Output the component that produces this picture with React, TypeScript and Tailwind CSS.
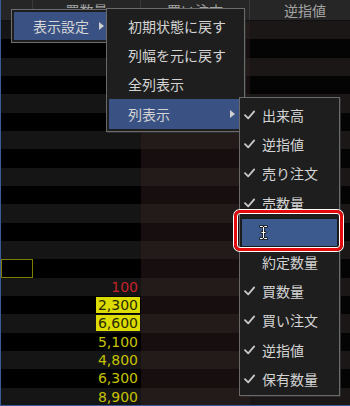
import React from "react";

type Num = { t: string; kind: "red" | "hl" | "y" };

const nums: Record<number, Num> = {
  14: { t: "100", kind: "red" },
  15: { t: "2,300", kind: "hl" },
  16: { t: "6,600", kind: "hl" },
  17: { t: "5,100", kind: "y" },
  18: { t: "4,800", kind: "y" },
  19: { t: "6,300", kind: "y" },
  20: { t: "8,900", kind: "y" },
};

function Check() {
  return (
    <svg width="11" height="10" viewBox="0 0 11 10" className="shrink-0">
      <path d="M1 5.2 L4.2 8.4 L10.2 1.4" fill="none" stroke="#c8c8c8" strokeWidth="1.8" strokeLinecap="round" strokeLinejoin="round" />
    </svg>
  );
}

function Tri() {
  return (
    <svg width="5" height="8" viewBox="0 0 5 8">
      <path d="M0 0 L5 4 L0 8 Z" fill="#d0d0d0" />
    </svg>
  );
}

function IBeam() {
  return (
    <svg width="9" height="15" viewBox="0 0 9 15">
      <path d="M1.5 1.5 H3.5 L4.5 2.5 L5.5 1.5 H7.5 M4.5 2.5 V12.5 M1.5 13.5 H3.5 L4.5 12.5 L5.5 13.5 H7.5 M3 7.5 H6" fill="none" stroke="#1a1a1a" strokeWidth="2.6" strokeLinecap="square" />
      <path d="M1.5 1.5 H3.5 L4.5 2.5 L5.5 1.5 H7.5 M4.5 2.5 V12.5 M1.5 13.5 H3.5 L4.5 12.5 L5.5 13.5 H7.5 M3 7.5 H6" fill="none" stroke="#ffffff" strokeWidth="1" strokeLinecap="square" />
    </svg>
  );
}

export default function App() {
  const rows = Array.from({ length: 21 }, (_, k) => k);
  const sub3 = [
    { t: "出来高", c: true },
    { t: "逆指値", c: true },
    { t: "売り注文", c: true },
    { t: "売数量", c: true },
    { t: "", c: false, hl: true },
    { t: "約定数量", c: false },
    { t: "買数量", c: true },
    { t: "買い注文", c: true },
    { t: "逆指値", c: true },
    { t: "保有数量", c: true },
  ];
  return (
    <div className="relative w-[350px] h-[406px] overflow-hidden bg-black border-l border-b border-[#3b5a9a] font-['Noto_Sans_CJK_JP',sans-serif]">
      {/* header */}
      <div className="flex h-[21px] bg-[#262626] border-b border-[#111111] text-[14px] leading-[20px] text-[#a3a3a3]">
        <div className="w-[32px] border-r border-[#3a3a3a]" />
        <div className="w-[108px] border-r border-[#3a3a3a] text-center">買数量</div>
        <div className="w-[109px] border-r border-[#3a3a3a] text-center">買い注文</div>
        <div className="flex-1 text-center pl-[10px]">逆指値</div>
      </div>
      {/* rows */}
      {rows.map((k) => {
        const light = k % 2 === 0;
        const n = nums[k];
        return (
          <div key={k} className="flex h-[18.33px]">
            <div className={`w-[32px] ${light ? "bg-[#151515]" : "bg-black"} flex`}>
              {k === 13 && <div className="w-full h-full border-[1.5px] border-[#7c7c00]" />}
            </div>
            <div className={`w-[108px] flex items-center justify-end pr-[1px] ${light ? "bg-[#151515]" : "bg-black"}`}>
              {n && (
                <span
                  className={`font-['DejaVu_Sans',sans-serif] text-[14px] leading-[16px] px-[2px] ${
                    n.kind === "red"
                      ? "text-[#c4232a]"
                      : n.kind === "hl"
                      ? "bg-[#dcdc00] text-[#2a2a00]"
                      : "text-[#c6c200]"
                  }`}
                >
                  {n.t}
                </span>
              )}
            </div>
            <div className={`w-[109px] ${light ? "bg-[#231a1a]" : "bg-[#170f0f]"}`} />
            <div className={`flex-1 ${light ? "bg-[#1b1717]" : "bg-[#050404]"}`} />
          </div>
        );
      })}

      {/* menu 1 */}
      <div className="absolute left-[10px] top-[9px] w-[102px] h-[34px] bg-[#1e1e1e] border border-[#6e6e6e] p-[2px]">
        <div className="relative h-full bg-[#3a5183] flex items-center pl-[19px] text-[14px] leading-none text-[#d6d6d6]">
          表示設定
          <div className="absolute left-[85px] top-[10px]">
            <Tri />
          </div>
        </div>
      </div>

      {/* submenu 2 */}
      <div className="absolute left-[105px] top-[8px] w-[139px] bg-[#1e1e1e] border border-[#6a6a6a] px-[2px] pt-[2px] pb-[2px] shadow-[1px_1px_0_#2c2c2c] text-[14px] leading-none text-[#d4d4d4]">
        <div className="h-[29.4px] flex items-center pl-[19px]">初期状態に戻す</div>
        <div className="h-[29.4px] flex items-center pl-[19px]">列幅を元に戻す</div>
        <div className="h-[29.4px] flex items-center pl-[19px]">全列表示</div>
        <div className="relative h-[29.4px] flex items-center pl-[19px] bg-[#3a5183]">
          列表示
          <div className="absolute right-[7px] top-[11px]">
            <Tri />
          </div>
        </div>
      </div>

      {/* submenu 3 */}
      <div className="absolute left-[238px] top-[97px] w-[101px] bg-[#1e1e1e] border border-[#6a6a6a] px-[1px] pt-[2px] pb-[1px] shadow-[1px_1px_0_#2c2c2c] text-[14px] leading-none text-[#d4d4d4]">
        {sub3.map((it, i) =>
          it.hl ? (
            <div key={i} className="h-[29.4px] flex">
              <div className="flex-1 bg-[#3d5a8f] border border-[#1a1a1a] flex items-center pl-[17px]">
                <IBeam />
              </div>
            </div>
          ) : (
            <div key={i} className="h-[29.4px] flex items-center pl-[3px] gap-[7px]">
              {it.c ? <Check /> : <div className="w-[11px]" />}
              <span>{it.t}</span>
            </div>
          )
        )}
      </div>

      {/* red annotation */}
      <div className="absolute left-[233px] top-[210px] w-[109px] h-[41px] rounded-[6px] border-[3px] border-[#e30b0b] shadow-[0_0_0_1px_#ffffff,inset_0_0_0_1px_#ffffff]" />
    </div>
  );
}
